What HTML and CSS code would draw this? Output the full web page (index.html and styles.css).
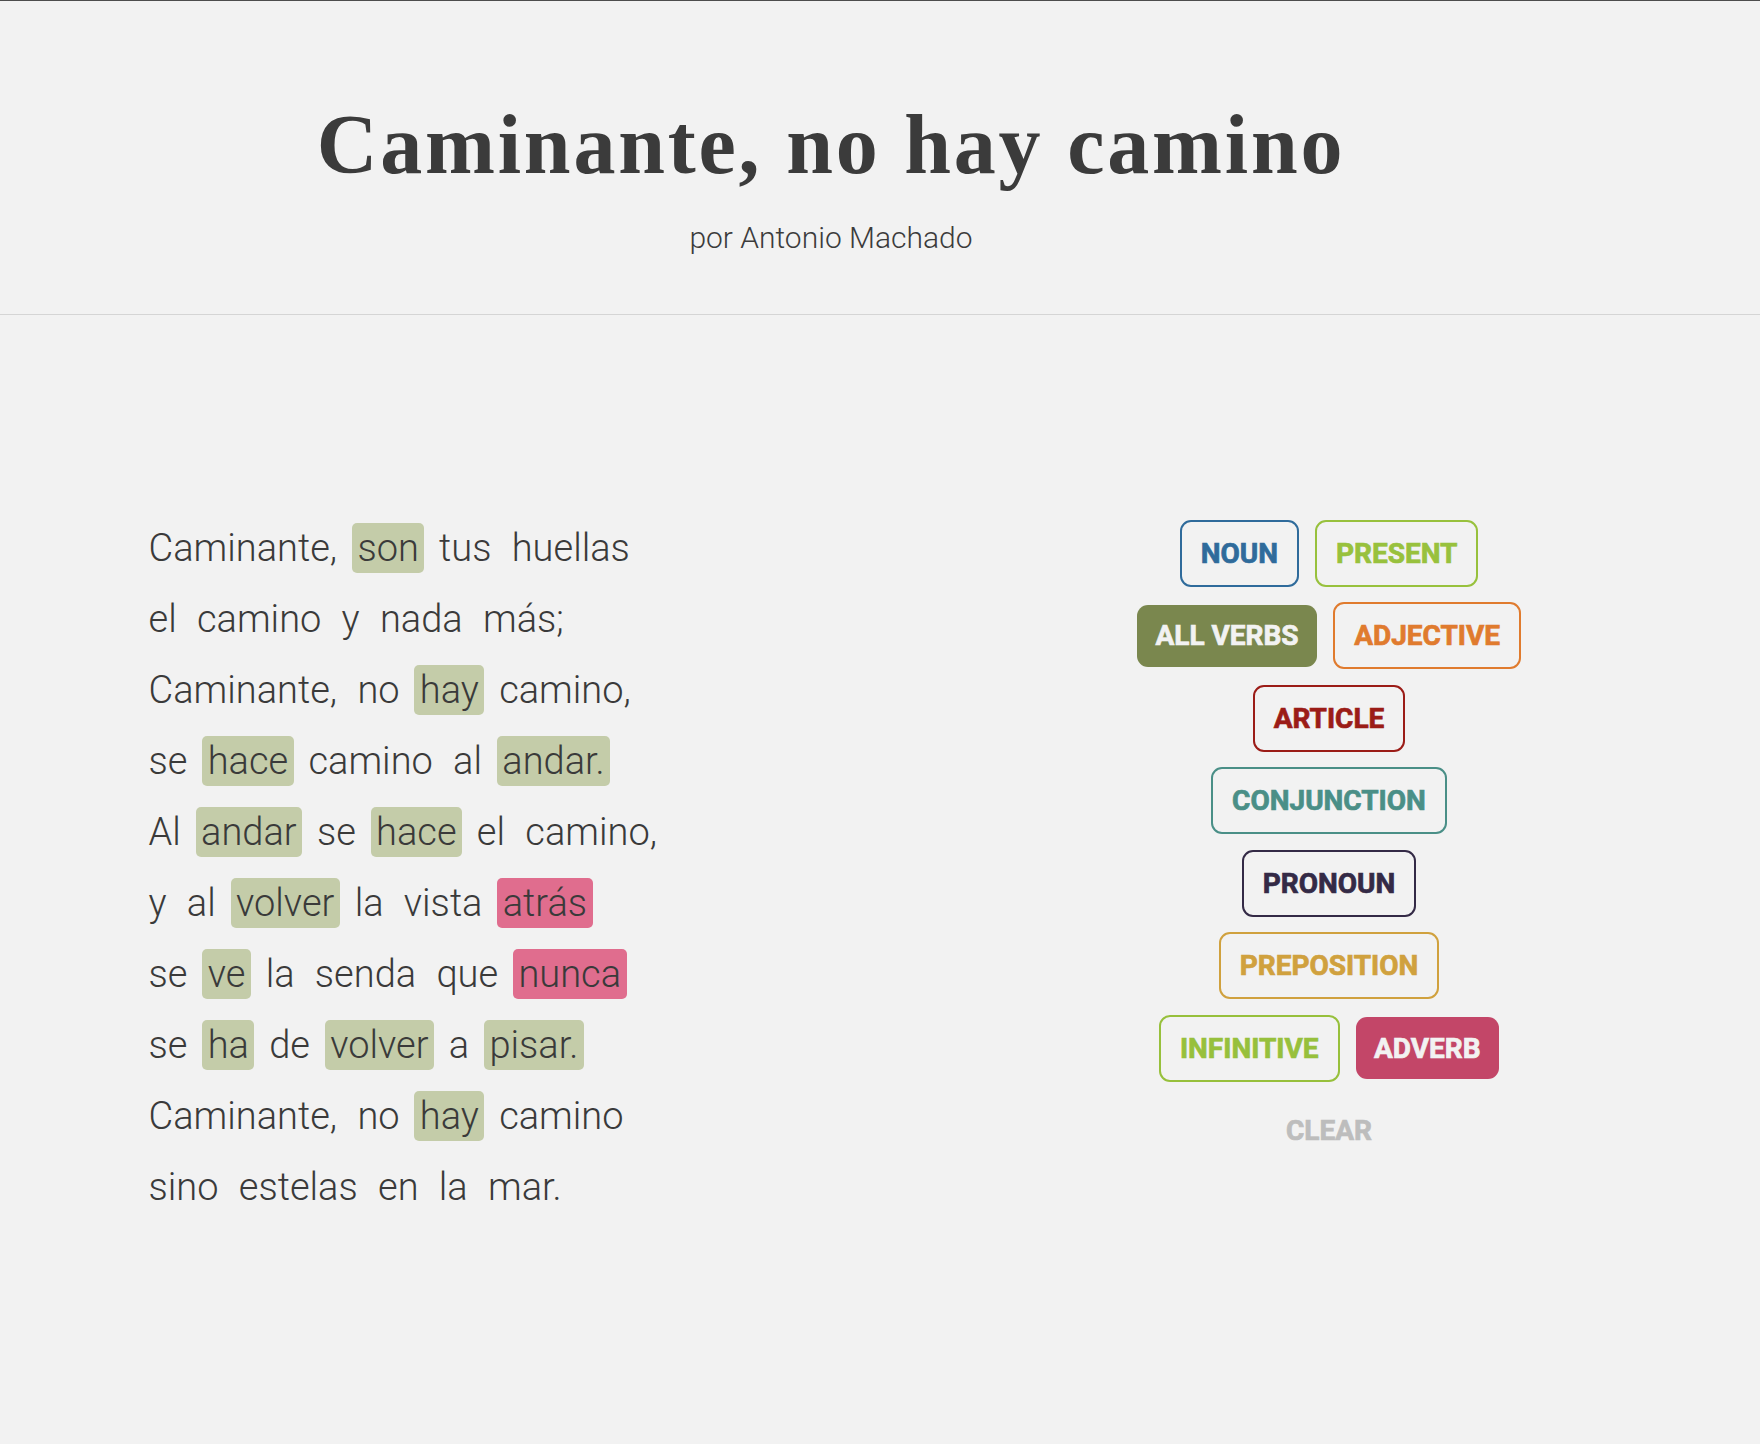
FILE: index.html
```html
<!DOCTYPE html>
<html lang="es">
<head>
<meta charset="utf-8">
<title>Caminante, no hay camino</title>
<link rel="stylesheet" href="styles.css">
</head>
<body>
<header class="header">
  <h1 class="title">Caminante, no hay camino</h1>
  <p class="author">por Antonio Machado</p>
</header>
<main class="main">
  <section class="poem">
    <div class="line"><span class="w">Caminante,</span> <span class="w verb">son</span> <span class="w">tus</span> <span class="w">huellas</span></div>
    <div class="line"><span class="w">el</span> <span class="w">camino</span> <span class="w">y</span> <span class="w">nada</span> <span class="w">más;</span></div>
    <div class="line"><span class="w">Caminante,</span> <span class="w">no</span> <span class="w verb">hay</span> <span class="w">camino,</span></div>
    <div class="line"><span class="w">se</span> <span class="w verb">hace</span> <span class="w">camino</span> <span class="w">al</span> <span class="w verb">andar.</span></div>
    <div class="line"><span class="w">Al</span> <span class="w verb">andar</span> <span class="w">se</span> <span class="w verb">hace</span> <span class="w">el</span> <span class="w">camino,</span></div>
    <div class="line"><span class="w">y</span> <span class="w">al</span> <span class="w verb">volver</span> <span class="w">la</span> <span class="w">vista</span> <span class="w adverb">atrás</span></div>
    <div class="line"><span class="w">se</span> <span class="w verb">ve</span> <span class="w">la</span> <span class="w">senda</span> <span class="w">que</span> <span class="w adverb">nunca</span></div>
    <div class="line"><span class="w">se</span> <span class="w verb">ha</span> <span class="w">de</span> <span class="w verb">volver</span> <span class="w">a</span> <span class="w verb">pisar.</span></div>
    <div class="line"><span class="w">Caminante,</span> <span class="w">no</span> <span class="w verb">hay</span> <span class="w">camino</span></div>
    <div class="line"><span class="w">sino</span> <span class="w">estelas</span> <span class="w">en</span> <span class="w">la</span> <span class="w">mar.</span></div>
  </section>
  <aside class="controls">
    <div class="row"><button class="tag noun">NOUN</button><button class="tag present">PRESENT</button></div>
    <div class="row"><button class="tag verbs active">ALL VERBS</button><button class="tag adjective">ADJECTIVE</button></div>
    <div class="row"><button class="tag article">ARTICLE</button></div>
    <div class="row"><button class="tag conjunction">CONJUNCTION</button></div>
    <div class="row"><button class="tag pronoun">PRONOUN</button></div>
    <div class="row"><button class="tag preposition">PREPOSITION</button></div>
    <div class="row"><button class="tag infinitive">INFINITIVE</button><button class="tag adverbtag active">ADVERB</button></div>
    <button class="clear">CLEAR</button>
  </aside>
</main>
</body>
</html>
```

FILE: styles.css
```css
* { box-sizing: border-box; }

html, body {
  margin: 0;
  padding: 0;
  background: #f2f2f2;
}

body {
  font-family: Roboto, "Noto Sans", sans-serif;
  color: #3c3c3c;
  min-height: 1444px;
  border-top: 1px solid #4d4d4d;
}

.header {
  padding: 102px 98px 58px 0;
  text-align: center;
  border-bottom: 1px solid #d5d5d5;
}

.title {
  margin: 0;
  font-family: "Liberation Serif", "Times New Roman", serif;
  font-weight: 700;
  font-size: 84px;
  line-height: 84px;
  letter-spacing: 2.8px;
  color: #3b3b3b;
}

.author {
  margin: 33px 0 0;
  font-family: Roboto, sans-serif;
  font-weight: 300;
  font-size: 30px;
  line-height: 36px;
  color: #3c3c3c;
}

.main {
  display: grid;
  grid-template-columns: 1fr 862px;
  padding: 197px 0 0 143px;
}

.poem {
  padding-top: 1px;
  font-weight: 300;
  font-size: 38px;
  color: #3a3a3a;
}

.line {
  line-height: 71px;
  white-space: nowrap;
}

.w {
  padding: 3px 5.5px;
  border-radius: 5px;
}

.verb { background: #c4cca9; }
.adverb { background: #e06d8e; }

.controls {
  display: flex;
  flex-direction: column;
  align-items: center;
}

.row {
  display: flex;
  justify-content: center;
  align-items: center;
}

.tag {
  margin: 7.75px 8px;
  padding: 15px 19px;
  border: 2px solid currentColor;
  border-radius: 11px;
  background: transparent;
  font-family: Roboto, sans-serif;
  font-weight: 700;
  font-size: 28px;
  line-height: 33px;
  -webkit-text-stroke: 0.7px currentColor;
  cursor: pointer;
}

.tag.active {
  border: none;
  padding: 14.5px 18.5px;
  color: #f2f2f2;
}

.noun { color: #2f6b9b; }
.present { color: #98c13d; }
.verbs { background: #7a874e; }
.adjective { color: #e07b2e; }
.article { color: #9b1c17; }
.conjunction { color: #4a8f87; }
.pronoun { color: #342a46; }
.preposition { color: #d0a13e; }
.infinitive { color: #97c03c; }
.adverbtag { background: #c34668; }

.clear {
  margin-top: 24px;
  padding: 0;
  border: none;
  background: transparent;
  font-family: Roboto, sans-serif;
  font-weight: 700;
  font-size: 28px;
  line-height: 33px;
  -webkit-text-stroke: 0.7px currentColor;
  color: #bdbdbd;
  cursor: pointer;
}
```
